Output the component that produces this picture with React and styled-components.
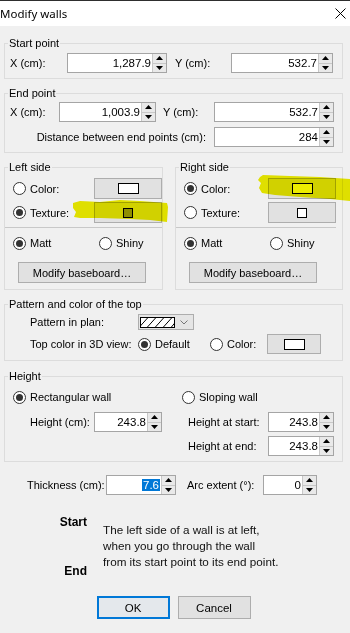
import React from "react";
import styled, { createGlobalStyle } from "styled-components";

const GlobalStyle = createGlobalStyle`
  * { box-sizing: border-box; }
  html, body { margin: 0; padding: 0; background: #f0f0f0; }
  body {
    font-family: "Liberation Sans", Arial, sans-serif;
    font-size: 11px;
    color: #000;
  }
`;

function Spinner({ value, w, selected }) {
  return (
    <SpinBox $w={w}>
      <SpinField>{selected ? <Selected>{value}</Selected> : value}</SpinField>
      <SpinArrows>
        <ArrowBtn>
          <svg width="7" height="4" viewBox="0 0 7 4">
            <path d="M0 4 L3.5 0 L7 4 Z" fill="#000" />
          </svg>
        </ArrowBtn>
        <ArrowBtn>
          <svg width="7" height="4" viewBox="0 0 7 4">
            <path d="M0 0 L3.5 4 L7 0 Z" fill="#000" />
          </svg>
        </ArrowBtn>
      </SpinArrows>
    </SpinBox>
  );
}

function Radio({ label, checked, w }) {
  return (
    <RadioItem $w={w}>
      <RadioDot $on={checked} />
      {label}
    </RadioItem>
  );
}

function SwatchButton({ w = 68, h = 21, kind = "color", fill = "#fff" }) {
  return (
    <ColorButton $w={w} $h={h}>
      <Swatch $kind={kind} $fill={fill} />
    </ColorButton>
  );
}

function SideGroup({ title, colorOn, colorFill, textureFill, padRight }) {
  return (
    <Group $pad={`4px ${padRight}px 6px 4px`}>
      <Legend>{title}</Legend>
      <Row $h={21} $pl={4}>
        <Radio label="Color:" checked={colorOn} />
        <Push>
          <SwatchButton fill={colorFill} />
        </Push>
      </Row>
      <Row $h={21} $pl={4} $mt={3}>
        <Radio label="Texture:" checked={!colorOn} />
        <Push>
          <SwatchButton kind="texture" fill={textureFill} />
        </Push>
      </Row>
      <Separator />
      <Row $h={16} $pl={4} $mt={7}>
        <Radio label="Matt" checked w={86} />
        <Radio label="Shiny" />
      </Row>
      <Row $h={21} $pl={9} $mt={11}>
        <PushButton $w={128} $h={21}>Modify baseboard…</PushButton>
      </Row>
    </Group>
  );
}

export default function App() {
  return (
    <Window>
      <GlobalStyle />
      <TitleBar>
        <Title>Modify walls</Title>
        <Close width="11" height="11" viewBox="0 0 11 11">
          <path d="M0.5 0.5 L10.5 10.5 M10.5 0.5 L0.5 10.5" stroke="#000" strokeWidth="1" />
        </Close>
      </TitleBar>

      <Body>
        <Group $pad="3px 8px 5px 4px">
          <Legend>Start point</Legend>
          <Row $pl={1}>
            <Label $w={57}>X (cm):</Label>
            <Spinner w={100} value="1,287.9" />
            <Label $w={56} $ml={8}>Y (cm):</Label>
            <Spinner w={102} value="532.7" />
          </Row>
        </Group>

        <Group $mt={7} $pad="2px 8px 5px 4px">
          <Legend>End point</Legend>
          <Row $pl={1}>
            <Label $w={49}>X (cm):</Label>
            <Spinner w={97} value="1,003.9" />
            <Label $w={51} $ml={7}>Y (cm):</Label>
            <Spinner w={120} value="532.7" />
          </Row>
          <Row $end $mt={5}>
            <Label>Distance between end points (cm):</Label>
            <Label $w={8} />
            <Spinner w={120} value="284" />
          </Row>
        </Group>

        <Sides>
          <SideGroup title="Left side" colorOn={false} colorFill="#fff" textureFill="#9a9a9a" padRight={0} />
          <SideGroup title="Right side" colorOn colorFill="#ffff00" textureFill="#fff" padRight={6} />
        </Sides>

        <Group $mt={7} $pad="3px 8px 6px 4px">
          <Legend>Pattern and color of the top</Legend>
          <Row $h={16} $pl={21}>
            <Label $w={108}>Pattern in plan:</Label>
            <Combo>
              <svg width="35" height="11" viewBox="0 0 35 11">
                <rect x="0.5" y="0.5" width="34" height="10" fill="#fff" stroke="#000" />
                <path
                  d="M-1 10.5 L8 0.5 M7 10.5 L16 0.5 M15 10.5 L24 0.5 M23 10.5 L32 0.5 M31 10.5 L36 4.5"
                  stroke="#000"
                  strokeWidth="1"
                />
              </svg>
              <svg width="8" height="5" viewBox="0 0 8 5">
                <path d="M0.5 0.5 L4 4 L7.5 0.5" fill="none" stroke="#777" strokeWidth="1" />
              </svg>
            </Combo>
          </Row>
          <Row $pl={21} $mt={4}>
            <Label $w={108}>Top color in 3D view:</Label>
            <Radio label="Default" checked w={72} />
            <Radio label="Color:" w={57} />
            <SwatchButton w={54} h={20} />
          </Row>
        </Group>

        <Group $mt={8} $pad="6px 8px 5px 4px">
          <Legend>Height</Legend>
          <HeightGrid>
            <Column>
              <Row $h={16} $pl={4}>
                <Radio label="Rectangular wall" checked />
              </Row>
              <Row $pl={21} $mt={7}>
                <Label $w={64}>Height (cm):</Label>
                <Spinner w={68} value="243.8" />
              </Row>
            </Column>
            <Column>
              <Row $h={16}>
                <Radio label="Sloping wall" />
              </Row>
              <Row $pl={6} $mt={7}>
                <Label $w={80}>Height at start:</Label>
                <Spinner w={66} value="243.8" />
              </Row>
              <Row $pl={6} $mt={4}>
                <Label $w={80}>Height at end:</Label>
                <Spinner w={66} value="243.8" />
              </Row>
            </Column>
          </HeightGrid>
        </Group>

        <Row $pl={23} $mt={13}>
          <Label $w={79}>Thickness (cm):</Label>
          <Spinner w={70} value="7.6" selected />
          <Label $w={76} $ml={11}>Arc extent (°):</Label>
          <Spinner w={54} value="0" />
        </Row>

        <Explain>
          <Ends>
            <b>Start</b>
            <b>End</b>
          </Ends>
          <Note>
            The left side of a wall is at left,
            <br />
            when you go through the wall
            <br />
            from its start point to its end point.
          </Note>
        </Explain>

        <Buttons>
          <PushButton $w={73} $h={23} $default>OK</PushButton>
          <PushButton $w={73} $h={23}>Cancel</PushButton>
        </Buttons>
      </Body>

      <Marker viewBox="0 0 350 633">
        <polygon points="73,203 80,201 100,202 120,200 140,201 167,203 168,207 167,222 150,220 130,219 100,218 80,218 74,217 76,212 73,208" />
        <polygon points="260,177 263,175 290,176 320,177 350,179 350,201 330,199 300,197 275,195 262,193 259,188 261,183 258,180" />
      </Marker>
    </Window>
  );
}

const Window = styled.div`
  position: relative;
  width: 350px;
  height: 633px;
  overflow: hidden;
  background: #f0f0f0;
`;

const TitleBar = styled.div`
  height: 26px;
  background: #fff;
  border-top: 1px solid #2e2e2e;
  display: flex;
  align-items: center;
  justify-content: space-between;
  padding-right: 4px;
`;

const Title = styled.span`
  font-family: "Noto Sans", "Open Sans", sans-serif;
  font-size: 11.5px;
  color: #000;
`;

const Close = styled.svg`
  display: block;
`;

const Body = styled.div`
  padding: 10px 7px 0 4px;
`;

const Group = styled.fieldset`
  margin: ${(p) => p.$mt || 0}px 0 0 0;
  min-width: 0;
  border: 1px solid #dcdcdc;
  padding: ${(p) => p.$pad};
`;

const Legend = styled.legend`
  padding: 0 1px;
  margin-left: -1px;
  font-size: 11px;
  line-height: 14px;
`;

const Row = styled.div`
  display: flex;
  align-items: center;
  height: ${(p) => p.$h || 20}px;
  padding-left: ${(p) => p.$pl || 0}px;
  margin-top: ${(p) => p.$mt || 0}px;
  justify-content: ${(p) => (p.$end ? "flex-end" : "flex-start")};
`;

const Label = styled.span`
  flex-shrink: 0;
  white-space: nowrap;
  width: ${(p) => (p.$w ? `${p.$w}px` : "auto")};
  margin-left: ${(p) => p.$ml || 0}px;
`;

const Push = styled.div`
  margin-left: auto;
  display: flex;
`;

const SpinBox = styled.div`
  flex-shrink: 0;
  display: flex;
  width: ${(p) => p.$w}px;
  height: 20px;
  background: #fff;
  border: 1px solid #a5a5a5;
`;

const SpinField = styled.div`
  flex: 1;
  text-align: right;
  padding-right: 1px;
  font-size: 11.5px;
  line-height: 18px;
`;

const Selected = styled.span`
  background: #0078d7;
  color: #fff;
  padding: 0 1px;
`;

const SpinArrows = styled.div`
  width: 14px;
  display: flex;
  flex-direction: column;
  border-left: 1px solid #c8c8c8;
`;

const ArrowBtn = styled.div`
  flex: 1;
  display: flex;
  align-items: center;
  justify-content: center;
  background: #e9e9e9;
  & + & {
    border-top: 1px solid #c8c8c8;
  }
`;

const RadioItem = styled.span`
  flex-shrink: 0;
  display: inline-flex;
  align-items: center;
  gap: 4px;
  white-space: nowrap;
  width: ${(p) => (p.$w ? `${p.$w}px` : "auto")};
`;

const RadioDot = styled.span`
  width: 13px;
  height: 13px;
  border-radius: 50%;
  border: 1px solid #333;
  background: #fff;
  display: inline-flex;
  align-items: center;
  justify-content: center;
  &::after {
    content: "";
    width: 7px;
    height: 7px;
    border-radius: 50%;
    background: ${(p) => (p.$on ? "#333" : "transparent")};
  }
`;

const ColorButton = styled.div`
  flex-shrink: 0;
  width: ${(p) => p.$w}px;
  height: ${(p) => p.$h}px;
  background: #e1e1e1;
  border: 1px solid #adadad;
  display: flex;
  align-items: center;
  justify-content: center;
`;

const Swatch = styled.span`
  width: ${(p) => (p.$kind === "texture" ? 10 : 21)}px;
  height: ${(p) => (p.$kind === "texture" ? 10 : 11)}px;
  border: 1px solid #000;
  background: ${(p) => p.$fill};
`;

const Separator = styled.div`
  height: 1px;
  background: #c8c8c8;
  margin: 4px 0 0 -4px;
`;

const PushButton = styled.div`
  flex-shrink: 0;
  width: ${(p) => p.$w}px;
  height: ${(p) => p.$h}px;
  display: flex;
  align-items: center;
  justify-content: center;
  background: ${(p) => (p.$default ? "#e4e8ec" : "#e1e1e1")};
  border: ${(p) => (p.$default ? "2px solid #0078d7" : "1px solid #adadad")};
  font-size: ${(p) => (p.$h > 22 ? "11.5px" : "11px")};
`;

const Sides = styled.div`
  display: grid;
  grid-template-columns: 159px 168px;
  column-gap: 12px;
  align-items: start;
  margin-top: 7px;
`;

const Combo = styled.div`
  width: 56px;
  height: 16px;
  background: #e5e5e5;
  border: 1px solid #adadad;
  display: flex;
  align-items: center;
  gap: 5px;
  padding-left: 1px;
`;

const HeightGrid = styled.div`
  display: grid;
  grid-template-columns: 173px 1fr;
`;

const Column = styled.div`
  display: flex;
  flex-direction: column;
`;

const Explain = styled.div`
  display: flex;
  gap: 16px;
  margin-top: 19px;
`;

const Ends = styled.div`
  width: 83px;
  height: 65px;
  display: flex;
  flex-direction: column;
  justify-content: space-between;
  align-items: flex-end;
  font-size: 12px;
  line-height: 16px;
`;

const Note = styled.div`
  margin-top: 8px;
  font-size: 11.7px;
  line-height: 16px;
  color: #111;
`;

const Buttons = styled.div`
  display: flex;
  justify-content: center;
  gap: 8px;
  margin-top: 17px;
`;

const Marker = styled.svg`
  position: absolute;
  left: 0;
  top: 0;
  width: 350px;
  height: 633px;
  pointer-events: none;
  mix-blend-mode: multiply;
  fill: #eded00;
`;
